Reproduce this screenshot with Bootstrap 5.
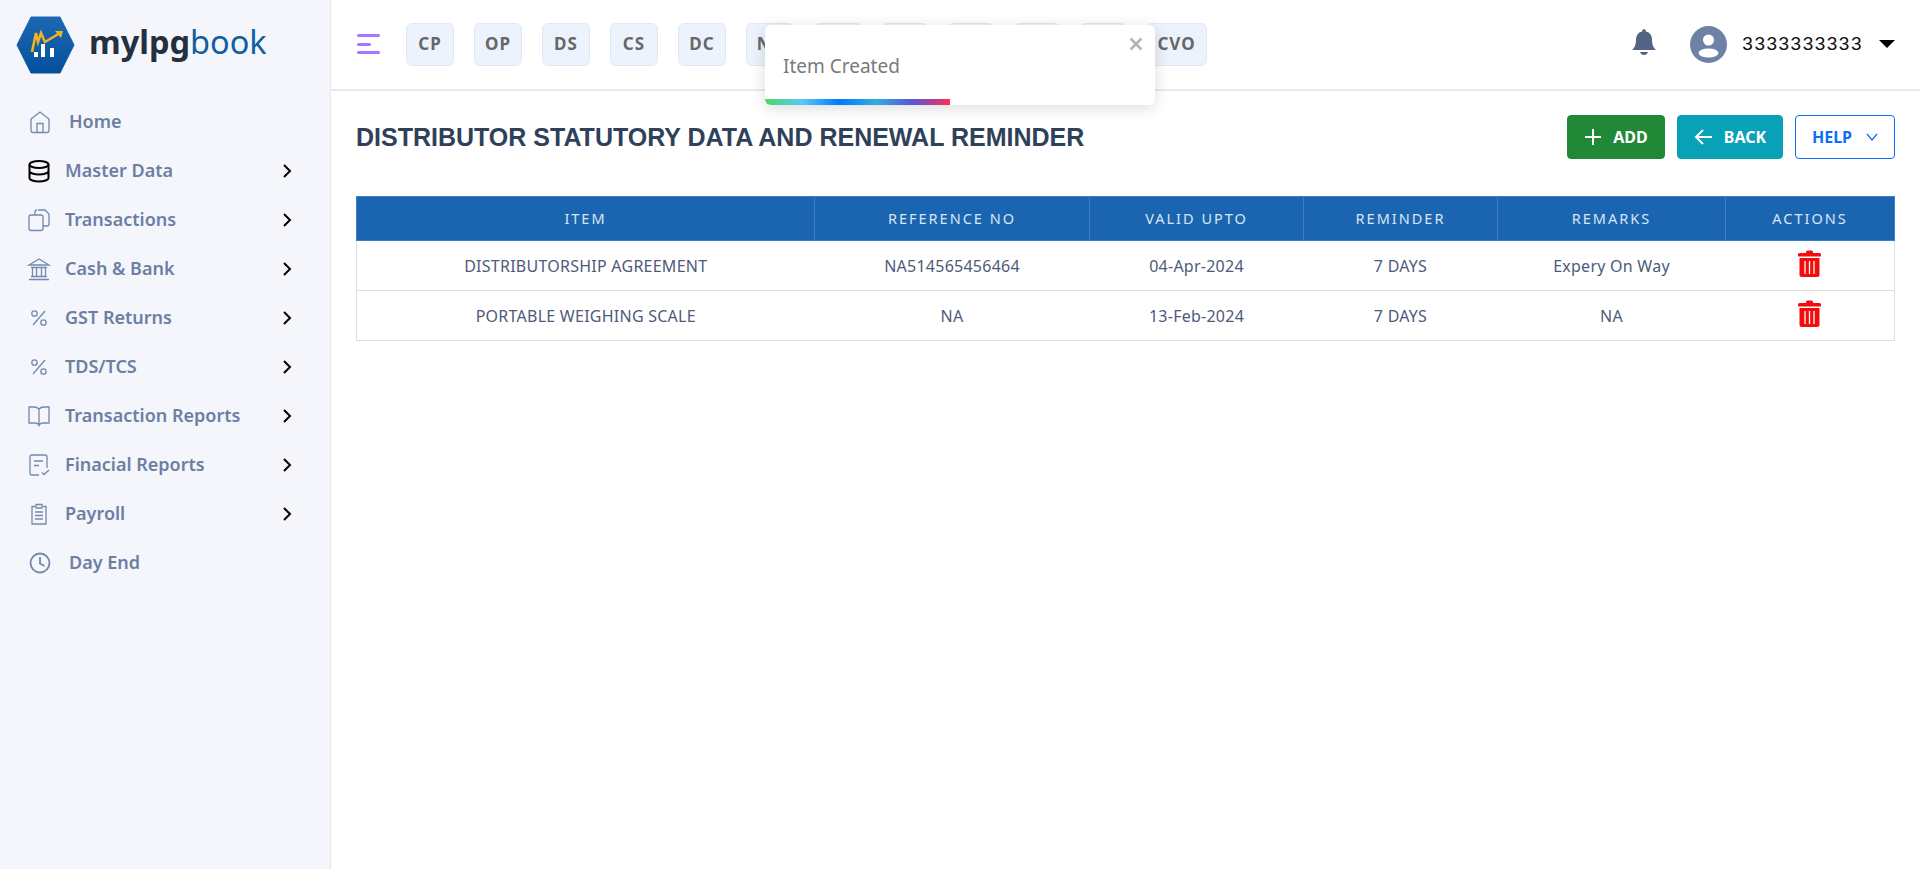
<!DOCTYPE html>
<html lang="en">
<head>
  <meta charset="UTF-8" />
  <title>Distributor Statutory Data</title>
  <meta name="viewport" content="width=device-width, initial-scale=1" />
  <link href="https://cdn.jsdelivr.net/npm/bootstrap@5.3.0/dist/css/bootstrap.min.css" rel="stylesheet" />
  <style>
    body {
      font-family: "Noto Sans", Roboto, sans-serif;
      background: #fff;
      height: 869px;
      overflow: hidden;
    }
    .app-shell { height: 869px; }
    .side-panel {
      width: 331px;
      flex: none;
      background: #f4f6fb;
      border-right: 1px solid #e6e8f0;
    }
    .logo-row { height: 89px; padding-left: 16px; gap: 14px; }
    .logo-word { font-size: 32.5px; font-weight: 700; color: #25303e; line-height: 1; margin-top: -5px; }
    .logo-word span { font-weight: 400; color: #11609f; }
    .side-menu { padding-top: 8px; }
    .side-item {
      height: 49px;
      padding-left: 26px;
      color: #6c7fa3;
      font-size: 18px;
      font-weight: 600;
    }
    .side-icon { width: 26px; height: 26px; flex: none; margin-right: 13px; fill: none; stroke: #7389ae; stroke-width: 1.3; }
    .side-item.plain { padding-left: 27px; }
    .side-item.plain .side-icon { margin-right: 16px; }
    .side-arrow { width: 12px; height: 14px; margin-left: auto; margin-right: 37px; fill: none; stroke: #000; stroke-width: 2; }
    .top-bar {
      height: 91px;
      padding: 0 25px 1px 26px;
      border-bottom: 2px solid #e8e9f1;
    }
    .burger { width: 24px; height: 22px; flex: none; margin-right: 25px; }
    .chip-row { gap: 20px; }
    .short-chip {
      width: 48px;
      height: 43px;
      background: #edf3fc;
      border: 1px solid #e2e8f3;
      border-radius: 6px;
      color: #676767;
      font-size: 17px;
      font-weight: 700;
      letter-spacing: 1px;
    }
    .short-chip.tight-chip { width: 46px; }
    .short-chip.wide-chip { width: 61px; }
    .bell-icon { width: 26px; height: 28px; margin-right: 33px; margin-top: -4px; }
    .user-pic { width: 37px; height: 37px; margin-right: 15px; }
    .user-num { font-size: 19px; color: #111; letter-spacing: 1.5px; font-family: "Liberation Sans", sans-serif; }
    .user-caret { width: 0; height: 0; margin-left: 16px; border-left: 8px solid transparent; border-right: 8px solid transparent; border-top: 8px solid #000; }
    .page-body { padding: 24px 25px 0 25px; }
    .page-title {
      font-family: "Liberation Sans", Arial, sans-serif;
      font-size: 25px;
      font-weight: 700;
      color: #2f4159;
      margin: 0;
      padding-top: 7px;
    }
    .act-btn {
      height: 44px;
      font-size: 16px;
      font-weight: 700;
      border-radius: 4px;
      padding: 0;
      column-gap: 11px;
    }
    .btn-add { width: 98px; background: #218838; border-color: #218838; color: #fff; }
    .btn-back { width: 106px; background: #08a1b8; border-color: #08a1b8; color: #fff; }
    .btn-help { width: 100px; border-color: #0d6efd; color: #0d6efd; background: #fff; column-gap: 14px; }
    .btn-row { column-gap: 12px; }
    .data-table {
      margin-top: 37px;
      table-layout: fixed;
      border-collapse: collapse;
      color: #4e5a7a;
      font-size: 16px;
      letter-spacing: .25px;
      margin-bottom: 0;
    }
    .data-table th {
      height: 44px;
      padding: 0;
      background: #1b65b0;
      color: #d6e6f6;
      font-size: 14.5px;
      font-weight: 400;
      letter-spacing: 2px;
      text-align: center;
      vertical-align: middle;
      border: 1px solid #3a80c8;
    }
    .data-table td {
      height: 50px;
      padding: 0;
      text-align: center;
      vertical-align: middle;
      color: #4e5a7a;
      border-top: 1px solid #dedede;
      border-bottom: 1px solid #dedede;
      border-left: 0;
      border-right: 0;
    }
    .data-table td:first-child { border-left: 1px solid #dedede; }
    .data-table td:last-child { border-right: 1px solid #dedede; }
    .bin-icon { width: 23px; height: 27px; margin-top: -5px; display: block; margin-left: auto; margin-right: auto; }
    .toast-box {
      position: absolute;
      left: 765px;
      top: 25px;
      width: 390px;
      height: 80px;
      background: #fff;
      border-radius: 6px;
      box-shadow: 0 3px 16px rgba(0,0,0,.14);
      overflow: hidden;
    }
    .toast-text { position: absolute; left: 18px; top: 29px; font-size: 19px; color: #7a7a7a; line-height: 1.3; }
    .toast-x { position: absolute; right: 12px; top: 12px; width: 14px; height: 14px; }
    .toast-progress {
      position: absolute;
      left: 0;
      bottom: 0;
      height: 6px;
      width: 185px;
      background: linear-gradient(to right, #4cd964, #5ac8fa, #007aff, #34aadc, #5856d6, #ff2d55);
    }
  </style>
</head>
<body>
  <div class="d-flex app-shell">
    <!-- Sidebar -->
    <aside class="side-panel d-flex flex-column">
      <div class="d-flex align-items-center logo-row">
        <svg width="59" height="58" viewBox="0 0 59 58">
          <defs>
            <linearGradient id="hexFill" x1="0" y1="0" x2="0" y2="1">
              <stop offset="0" stop-color="#1d68b2" />
              <stop offset="1" stop-color="#03509c" />
            </linearGradient>
          </defs>
          <polygon points="15,1 44,1 58,29 44,57 15,57 1,29" fill="url(#hexFill)" stroke="url(#hexFill)" stroke-linejoin="round" stroke-width="1" />
          <rect x="18" y="36" width="4" height="5" fill="#fff" />
          <rect x="25" y="28" width="4" height="13" fill="#fff" />
          <rect x="34" y="32" width="4" height="9" fill="#fff" />
          <path d="M16 36 L20 17 L22 26 L25 17 L29 26 L44 17" fill="none" stroke="#f0b323" stroke-width="2.6" />
          <path d="M39 15 L47 15 L45 22 Z" fill="#f0b323" />
        </svg>
        <div class="logo-word">mylpg<span>book</span></div>
      </div>
      <nav class="side-menu">
        <div class="d-flex align-items-center side-item plain">
          <svg class="side-icon" viewBox="0 0 26 26"><path d="M4 10 L13 3 L22 10 V21.500 Q22 23.500 20 23.500 H6 Q4 23.500 4 21.500 Z M10 23.500 V14.500 H16 V23.500" /></svg>
          Home
        </div>
        <div class="d-flex align-items-center side-item">
          <svg class="side-icon" viewBox="0 0 26 26" style="stroke:#000;stroke-width:2"><ellipse cx="13" cy="6.500" rx="9.500" ry="3.500" /><path d="M3.500 6.500 V20 C3.500 22 8 23.500 13 23.500 S22.500 22 22.500 20 V6.500 M3.500 13 C3.500 15 8 16.500 13 16.500 S22.500 15 22.500 13" /></svg>
          Master Data
          <svg class="side-arrow" viewBox="0 0 12 14"><path d="M3 1 L9 7 L3 13" /></svg>
        </div>
        <div class="d-flex align-items-center side-item">
          <svg class="side-icon" viewBox="0 0 26 26"><path d="M12 3 H19 L23 7 V17 Q23 19 21 19 H17 M9 8 V5 Q9 3 11 3 M3 10 Q3 8 5 8 H15 Q17 8 17 10 V21.500 Q17 23.500 15 23.500 H5 Q3 23.500 3 21.500 Z" /></svg>
          Transactions
          <svg class="side-arrow" viewBox="0 0 12 14"><path d="M3 1 L9 7 L3 13" /></svg>
        </div>
        <div class="d-flex align-items-center side-item">
          <svg class="side-icon" viewBox="0 0 26 26"><path d="M3 9 L13 3 L23 9 Z M5 11.500 H21 M6.500 11.500 V20 M10.500 11.500 V20 M15.500 11.500 V20 M19.500 11.500 V20 M5 20.500 H21 M3 23.500 H23" /></svg>
          Cash &amp; Bank
          <svg class="side-arrow" viewBox="0 0 12 14"><path d="M3 1 L9 7 L3 13" /></svg>
        </div>
        <div class="d-flex align-items-center side-item">
          <svg class="side-icon" viewBox="0 0 26 26"><path d="M19 6 L7 20" /><circle cx="8.500" cy="8.500" r="2.700" /><circle cx="17.500" cy="17.500" r="2.700" /></svg>
          GST Returns
          <svg class="side-arrow" viewBox="0 0 12 14"><path d="M3 1 L9 7 L3 13" /></svg>
        </div>
        <div class="d-flex align-items-center side-item">
          <svg class="side-icon" viewBox="0 0 26 26"><path d="M19 6 L7 20" /><circle cx="8.500" cy="8.500" r="2.700" /><circle cx="17.500" cy="17.500" r="2.700" /></svg>
          TDS/TCS
          <svg class="side-arrow" viewBox="0 0 12 14"><path d="M3 1 L9 7 L3 13" /></svg>
        </div>
        <div class="d-flex align-items-center side-item">
          <svg class="side-icon" viewBox="0 0 26 26"><path d="M13 6 Q11 4 8 4 H3 V20 H9 Q12 20 13 22.500 Q14 20 17 20 H23 V4 H18 Q15 4 13 6 V22.500" /></svg>
          Transaction Reports
          <svg class="side-arrow" viewBox="0 0 12 14"><path d="M3 1 L9 7 L3 13" /></svg>
        </div>
        <div class="d-flex align-items-center side-item">
          <svg class="side-icon" viewBox="0 0 26 26"><path d="M13 23 H6 Q4 23 4 21 V5 Q4 3 6 3 H19 Q21 3 21 5 V16 M8 9 H17 M8 13.500 H13 M16 20.500 L18 22.500 L23 18" /></svg>
          Finacial Reports
          <svg class="side-arrow" viewBox="0 0 12 14"><path d="M3 1 L9 7 L3 13" /></svg>
        </div>
        <div class="d-flex align-items-center side-item">
          <svg class="side-icon" viewBox="0 0 26 26"><path d="M9 5.500 H6 V23 H20 V5.500 H17 M10 3.500 H16 V7 H10 Z M9 11 H17 M9 14.500 H17 M9 18 H17" /></svg>
          Payroll
          <svg class="side-arrow" viewBox="0 0 12 14"><path d="M3 1 L9 7 L3 13" /></svg>
        </div>
        <div class="d-flex align-items-center side-item plain">
          <svg class="side-icon" viewBox="0 0 26 26" style="stroke-width:1.800"><circle cx="13" cy="13" r="9.500" /><path d="M13 7 V13.500 L17.500 16" /></svg>
          Day End
        </div>
      </nav>
    </aside>

    <div class="flex-grow-1 d-flex flex-column" style="min-width:0">
      <!-- Top bar -->
      <header class="d-flex align-items-center top-bar">
        <svg class="burger" viewBox="0 0 24 22">
          <rect x="0" y="1" width="23" height="3" rx="1.500" fill="#a974ff" />
          <rect x="0" y="10" width="14" height="3" rx="1.500" fill="#a974ff" />
          <rect x="0" y="18" width="23" height="3" rx="1.500" fill="#a974ff" />
        </svg>
        <div class="d-flex chip-row">
          <div class="short-chip d-flex align-items-center justify-content-center">CP</div>
          <div class="short-chip d-flex align-items-center justify-content-center">OP</div>
          <div class="short-chip d-flex align-items-center justify-content-center">DS</div>
          <div class="short-chip d-flex align-items-center justify-content-center">CS</div>
          <div class="short-chip d-flex align-items-center justify-content-center">DC</div>
          <div class="short-chip d-flex align-items-center justify-content-center">NP</div>
          <div class="short-chip d-flex align-items-center justify-content-center">PR</div>
          <div class="short-chip tight-chip d-flex align-items-center justify-content-center">PI</div>
          <div class="short-chip tight-chip d-flex align-items-center justify-content-center">SI</div>
          <div class="short-chip tight-chip d-flex align-items-center justify-content-center">RC</div>
          <div class="short-chip tight-chip d-flex align-items-center justify-content-center">PV</div>
          <div class="short-chip wide-chip d-flex align-items-center justify-content-center">CVO</div>
        </div>
        <div class="ms-auto d-flex align-items-center">
          <svg class="bell-icon" viewBox="0 0 26 28">
            <path d="M13 1 Q15 1 15 3.500 Q21 5 21 12 Q21 19 25 22 H1 Q5 19 5 12 Q5 5 11 3.500 Q11 1 13 1 Z" fill="#526484" />
            <path d="M9 24 H17 Q16 27 13 27 Q10 27 9 24 Z" fill="#526484" />
          </svg>
          <svg class="user-pic" viewBox="0 0 37 37">
            <circle cx="18.500" cy="18.500" r="18.500" fill="#6f81a5" />
            <circle cx="18.500" cy="14" r="5.500" fill="#fff" />
            <ellipse cx="18.500" cy="27" rx="10" ry="4.500" fill="#fff" />
          </svg>
          <span class="user-num">3333333333</span>
          <span class="user-caret"></span>
        </div>
      </header>

      <!-- Content -->
      <main class="page-body">
        <div class="d-flex justify-content-between align-items-start">
          <h1 class="page-title">DISTRIBUTOR STATUTORY DATA AND RENEWAL REMINDER</h1>
          <div class="d-flex btn-row">
            <button class="btn act-btn btn-add d-flex align-items-center justify-content-center">
              <svg width="18" height="18" viewBox="0 0 18 18"><path d="M9 1 V17 M1 9 H17" stroke="#fff" stroke-width="2" fill="none" /></svg>
              ADD
            </button>
            <button class="btn act-btn btn-back d-flex align-items-center justify-content-center">
              <svg width="19" height="18" viewBox="0 0 19 18"><path d="M18 9 H2 M9 2 L2 9 L9 16" stroke="#fff" stroke-width="2" fill="none" /></svg>
              BACK
            </button>
            <button class="btn act-btn btn-help d-flex align-items-center justify-content-center">
              HELP
              <svg width="12" height="8" viewBox="0 0 12 8"><path d="M1 1 L6 7 L11 1" stroke="#0d6efd" stroke-width="1.300" fill="none" /></svg>
            </button>
          </div>
        </div>

        <table class="table data-table">
          <colgroup>
            <col style="width:458px" />
            <col style="width:275px" />
            <col style="width:214px" />
            <col style="width:194px" />
            <col style="width:228px" />
            <col />
          </colgroup>
          <thead>
            <tr>
              <th>ITEM</th>
              <th>REFERENCE NO</th>
              <th>VALID UPTO</th>
              <th>REMINDER</th>
              <th>REMARKS</th>
              <th>ACTIONS</th>
            </tr>
          </thead>
          <tbody>
            <tr>
              <td>DISTRIBUTORSHIP AGREEMENT</td>
              <td>NA514565456464</td>
              <td>04-Apr-2024</td>
              <td>7 DAYS</td>
              <td>Expery On Way</td>
              <td>
                <svg class="bin-icon" viewBox="0 0 23 27">
                  <path d="M8 2 Q8 0.500 9.500 0.500 H13.500 Q15 0.500 15 2 V3 H21.500 Q23 3 23 4.500 V6.500 H0 V4.500 Q0 3 1.500 3 H8 Z" fill="#f40b0b" />
                  <path d="M1.500 8 H21.500 V24.500 Q21.500 27 19 27 H4 Q1.500 27 1.500 24.500 Z" fill="#f40b0b" />
                  <path d="M7 11 V24 M11.500 11 V24 M16 11 V24" stroke="#fff" stroke-width="1.300" />
                </svg>
              </td>
            </tr>
            <tr>
              <td>PORTABLE WEIGHING SCALE</td>
              <td>NA</td>
              <td>13-Feb-2024</td>
              <td>7 DAYS</td>
              <td>NA</td>
              <td>
                <svg class="bin-icon" viewBox="0 0 23 27">
                  <path d="M8 2 Q8 0.500 9.500 0.500 H13.500 Q15 0.500 15 2 V3 H21.500 Q23 3 23 4.500 V6.500 H0 V4.500 Q0 3 1.500 3 H8 Z" fill="#f40b0b" />
                  <path d="M1.500 8 H21.500 V24.500 Q21.500 27 19 27 H4 Q1.500 27 1.500 24.500 Z" fill="#f40b0b" />
                  <path d="M7 11 V24 M11.500 11 V24 M16 11 V24" stroke="#fff" stroke-width="1.300" />
                </svg>
              </td>
            </tr>
          </tbody>
        </table>
      </main>
    </div>
  </div>

  <!-- Toast -->
  <div class="toast-box">
    <div class="toast-text">Item Created</div>
    <svg class="toast-x" viewBox="0 0 14 14"><path d="M1.500 1.500 L12.500 12.500 M12.500 1.500 L1.500 12.500" stroke="#b3b3b3" stroke-width="2.600" /></svg>
    <div class="toast-progress"></div>
  </div>

  <script src="https://cdn.jsdelivr.net/npm/bootstrap@5.3.0/dist/js/bootstrap.bundle.min.js"></script>
</body>
</html>
